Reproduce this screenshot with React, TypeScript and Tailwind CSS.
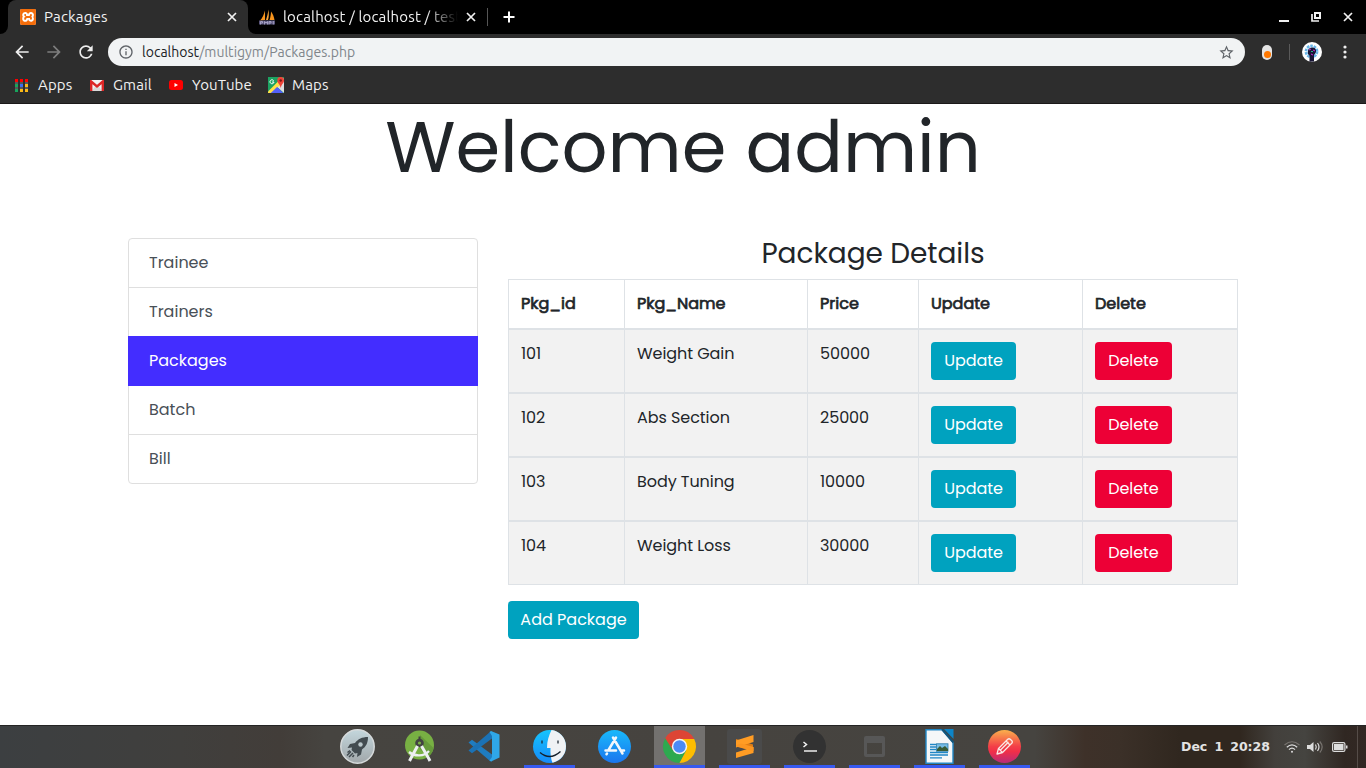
import React from "react";
import { MdArrowBack, MdArrowForward, MdRefresh, MdStarBorder, MdInfoOutline } from "react-icons/md";
import { SiXampp } from "react-icons/si";

const POPPINS = "font-[Poppins,Inter,'Liberation_Sans',sans-serif]";
const UBUNTU = "font-[Ubuntu,'Noto_Sans','Open_Sans',sans-serif]";

function CloseX({ className = "" }: { className?: string }) {
  return (
    <svg className={className} width="10" height="10" viewBox="0 0 10 10" stroke="#f1f1f1" strokeWidth="1.7">
      <path d="M1 1L9 9M9 1L1 9" />
    </svg>
  );
}

function SailFavicon() {
  return (
    <svg width="16" height="16" viewBox="0 0 16 16">
      <path d="M6 1.5L6 11L1 11.5C3.5 9 5 5 6 1.5Z" fill="#f7941d" />
      <path d="M9.5 0.5C10 5 10 8 9 11L7 11C8 8 9 4 9.5 0.5Z" fill="#f9a63a" />
      <path d="M12 2.5C14 5 15 8 15.5 11L10.5 11C11.5 8 12 5 12 2.5Z" fill="#f7941d" />
      <path d="M0 11.500H16V15.500H0Z" fill="#5b567c" />
      <path d="M1.500 15.500V12.500H3.500V14H1.500M5.500 15.500V12.500L7 14L8.500 12.500V15.500M10 15.500V12.500H12V14H10M14.300 12V15.500" fill="none" stroke="#aaa6c8" strokeWidth="0.9" />
    </svg>
  );
}

function TabStrip() {
  return (
    <div className="flex h-[34px] w-full items-stretch bg-black text-[15px] tracking-[0.17px] text-[#f1f1f1]">
      <div className="flex w-2 items-end bg-black">
        <div className="size-2 bg-[#2d2d2d]">
          <div className="size-2 rounded-br-lg bg-black" />
        </div>
      </div>
      <div className="flex w-[240px] items-center rounded-t-lg bg-[#2d2d2d] pl-3 pr-[11px]">
        <div className="flex size-4 items-center justify-center rounded-[2px] bg-white">
          <SiXampp size={16} className="text-[#f46d0b]" />
        </div>
        <span className="ml-2 w-[64px] whitespace-nowrap">Packages</span>
        <CloseX className="ml-auto" />
      </div>
      <div className="flex w-2 items-end bg-black">
        <div className="size-2 bg-[#2d2d2d]">
          <div className="size-2 rounded-bl-lg bg-black" />
        </div>
      </div>
      <div className="flex w-[231px] items-center pl-[3px] pr-[11px]">
        <SailFavicon />
        <span className="ml-2 w-[175px] overflow-hidden whitespace-nowrap [mask-image:linear-gradient(to_right,black_82%,transparent_100%)]">
          localhost / localhost / test
        </span>
        <CloseX className="ml-[8px] shrink-0" />
      </div>
      <div className="my-auto h-[18px] w-px bg-[#555]" />
      <svg className="my-auto ml-[15px]" width="12" height="12" viewBox="0 0 12 12" stroke="#fff" strokeWidth="2">
        <path d="M6 0.500V11.500M0.500 6H11.500" />
      </svg>
      <div className="ml-auto flex items-center gap-[22px] pr-[13px]">
        <svg width="10" height="10" viewBox="0 0 10 10">
          <path d="M0 8H10V10H0Z" fill="#f1f1f1" />
        </svg>
        <svg width="10" height="10" viewBox="0 0 10 10">
          <path d="M4 1H9V6H4Z" fill="none" stroke="#f1f1f1" strokeWidth="2" />
          <path d="M1 2V9H8" fill="none" stroke="#f1f1f1" strokeWidth="1.700" />
        </svg>
        <CloseX />
      </div>
    </div>
  );
}

function Toolbar() {
  return (
    <div className="flex h-[36px] items-center bg-[#2d2d2d] pl-3 pr-[19px]">
      <MdArrowBack size={20} className="text-[#eeeeee]" />
      <MdArrowForward size={20} className="ml-3 text-[#7d7d7d]" />
      <MdRefresh size={20} className="ml-3 text-[#eeeeee]" />
      <div className="ml-3 flex h-7 w-[1137px] items-center rounded-full bg-[#f1f3f4] pl-[10px] pr-[10px]">
        <MdInfoOutline size={16} className="text-[#5f6368]" />
        <span className="ml-2 whitespace-nowrap text-[14px] tracking-[0.02px] text-[#80868b]">
          <span className="text-[#202124]">localhost</span>/multigym/Packages.php
        </span>
        <MdStarBorder size={17} className="ml-auto text-[#5f6368]" />
      </div>
      <div className="ml-[17px] flex h-[15px] w-[10px] items-end justify-center rounded-[5px] bg-[#e4e4e4] pb-[1.500px]">
        <div className="size-[7px] rounded-full bg-[#ff7800]" />
      </div>
      <div className="ml-[17px] h-4 w-px bg-[#5a5a5a]" />
      <svg className="ml-3" width="20" height="20" viewBox="0 0 20 20">
        <circle cx="10" cy="10" r="10" fill="#fff" />
        <circle cx="9.500" cy="9.500" r="5.600" fill="#d6ecfb" stroke="#68b5e8" strokeWidth="2.600" strokeDasharray="2.500 1" />
        <path d="M6 9C6 5 13 4 14 8C14.500 10 13 12 12 13V19.500L7.500 19.800V13.500C6 13 5.500 11 6 9Z" fill="#191635" />
        <path d="M7 8L9 7M11 8L13 9M9 12L11 13" stroke="#d12be0" strokeWidth="1" />
        <path d="M9 9.500H11" stroke="#28ae91" />
      </svg>
      <svg className="ml-auto" width="4" height="14" viewBox="0 0 4 14" fill="#eee">
        <circle cx="2" cy="2" r="1.600" />
        <circle cx="2" cy="7" r="1.600" />
        <circle cx="2" cy="12" r="1.600" />
      </svg>
    </div>
  );
}

function Bookmarks() {
  return (
    <div className="flex h-[34px] items-center border-b border-[#1b1919] bg-[#2d2d2d] pb-[3px] pl-[15px] text-[15px] tracking-[0.15px] text-[#f1f1f1]">
      <svg width="13" height="13" viewBox="0 0 13 13">
        <path d="M0 0h3v3h-3zM5 0h3v3h-3zM10 0h3v3h-3z" fill="#f00" />
        <path d="M0 5h3v3h-3z" fill="#17a45c" />
        <path d="M5 5h3v3h-3z" fill="#3b6df0" />
        <path d="M10 5h3v3h-3zM5 10h3v3h-3zM10 10h3v3h-3z" fill="#fbb917" />
        <path d="M0 10h3v3h-3z" fill="#17a45c" />
        <path d="M0 4h3M5 4h3M10 4h3M0 9h3M5 9h3M10 9h3" stroke="#9a9a9a" strokeWidth="0.800" />
      </svg>
      <span className="ml-[10px] w-[35px] whitespace-nowrap">Apps</span>
      <svg className="ml-[17px]" width="14" height="11" viewBox="0 0 14 11">
        <rect width="14" height="11" rx="1" fill="#f2f2f2" />
        <path d="M2 11L5.500 6L7 7.500L8.500 6L12 11Z" fill="#d9d9d9" />
        <path d="M1.200 11V1.500L7 6.500L12.800 1.500V11" fill="none" stroke="#dc2626" strokeWidth="2.400" />
      </svg>
      <span className="ml-[9px] w-[39px] whitespace-nowrap">Gmail</span>
      <svg className="ml-[17px]" width="14" height="10" viewBox="0 0 14 10">
        <rect width="14" height="10" rx="2.500" fill="#f00" />
        <path d="M5.500 3V7L9 5Z" fill="#fff" />
      </svg>
      <span className="ml-[9px] w-[60px] whitespace-nowrap">YouTube</span>
      <svg className="ml-4" width="16" height="16" viewBox="0 0 16 16">
        <path d="M0 0H16V16H0Z" fill="#1ca261" />
        <path d="M8 9L16 1V16Z" fill="#dedede" />
        <path d="M1 16L8 9L15 16Z" fill="#4c64f5" />
        <path d="M0 14.500L11 3.500L14 6.500L3 16H0Z" fill="#ffe047" />
        <path d="M3 16L9 10L15 16Z" fill="#5360fa" />
        <path d="M5.700 3.700A2 2 0 1 0 6 5H4" fill="none" stroke="#fff" strokeWidth="1" />
        <path d="M12.500 0A3.400 3.400 0 0 1 16 3.500C16 6 13.500 7 12.700 11C12 7 9.300 6 9.300 3.500A3.300 3.300 0 0 1 12.500 0Z" fill="#ef4438" />
        <circle cx="12.700" cy="3.500" r="1.200" fill="#7b1712" />
      </svg>
      <span className="ml-2 whitespace-nowrap">Maps</span>
    </div>
  );
}

const links = ["Trainee", "Trainers", "Packages", "Batch", "Bill"];

function SideNav() {
  return (
    <nav className="mt-[1px] flex w-[350px] flex-col">
      {links.map((label) => (
        <a
          key={label}
          className={
            label === "Packages"
              ? "z-10 -mb-px h-[50px] border border-[#432dff] bg-[#432dff] px-5 py-3 leading-6 text-white"
              : "-mb-px h-[50px] border border-[#dfdfdf] px-5 py-3 leading-6 text-[#495057] first:rounded-t last:rounded-b"
          }
        >
          {label}
        </a>
      ))}
    </nav>
  );
}

const packages = [
  { id: "101", name: "Weight Gain", price: "50000" },
  { id: "102", name: "Abs Section", price: "25000" },
  { id: "103", name: "Body Tuning", price: "10000" },
  { id: "104", name: "Weight Loss", price: "30000" },
];

function Button({ children, className }: { children: React.ReactNode; className: string }) {
  return (
    <button className={`flex h-[38px] items-center justify-center whitespace-nowrap rounded leading-6 text-white ${className}`}>
      {children}
    </button>
  );
}

function PackageTable() {
  return (
    <table className="mt-2 w-[730px] table-fixed border-separate border-spacing-0 border-r border-[#dee2e6] text-left text-[#212529]">
      <colgroup>
        <col className="w-[116px]" />
        <col className="w-[183px]" />
        <col className="w-[111px]" />
        <col className="w-[164px]" />
        <col className="w-[155px]" />
      </colgroup>
      <thead>
        <tr className="h-[51px] align-top">
          {["Pkg_id", "Pkg_Name", "Price", "Update", "Delete"].map((h) => (
            <th key={h} className="border-b-2 border-l border-t border-[#dee2e6] px-3 pb-0 pt-3 font-normal leading-6 [-webkit-text-stroke:0.7px_#212529]">
              {h}
            </th>
          ))}
        </tr>
      </thead>
      <tbody className="[&_td]:border-b-2 [&_td]:border-l [&_td]:border-[#dee2e6] [&_td]:px-3 [&_td]:pt-3 [&_td]:tracking-[-0.06px] [&_tr:last-child_td]:border-b">
        {packages.map((p) => (
          <tr key={p.id} className="h-16 bg-[#f2f2f2] align-top last:h-[63px]">
            <td>{p.id}</td>
            <td>{p.name}</td>
            <td>{p.price}</td>
            <td>
              <Button className="w-[85px] bg-[#00a2bf]">Update</Button>
            </td>
            <td>
              <Button className="w-[77px] bg-[#ed0036]">Delete</Button>
            </td>
          </tr>
        ))}
      </tbody>
    </table>
  );
}

function RocketIcon() {
  return (
    <svg width="35" height="35" viewBox="0 0 35 35">
      <defs>
        <linearGradient id="rk" x1="0" y1="0" x2="0" y2="1">
          <stop offset="0" stopColor="#c3d6dc" />
          <stop offset="1" stopColor="#a1a7aa" />
        </linearGradient>
      </defs>
      <circle cx="17.500" cy="17.500" r="16.700" fill="url(#rk)" stroke="#d6dadb" strokeWidth="1.500" />
      <path d="M28 8C22 8 18 10 15 14L10 15L7.500 19L12 18.500L11.500 21L15 24.500L17.500 24L17 28L21 25.500L22 20.500C26 17.500 28 14 28 8Z" fill="#424b50" />
      <circle cx="20.500" cy="15.500" r="2.200" fill="#b9c6ca" />
      <path d="M11 22.500L7 26.500M13 24L9 28M10 21.500L7.500 23.500M14 26L12.500 28" stroke="#424b50" strokeWidth="1.500" />
    </svg>
  );
}

function AndroidStudioIcon() {
  return (
    <svg width="35" height="35" viewBox="0 0 35 35">
      <circle cx="17.500" cy="16" r="14.500" fill="#78b043" />
      <path d="M18 6L31.500 19A14.500 14.500 0 0 1 26 28L18 20Z" fill="#669a3a" />
      <path d="M16.500 7.500H18.500V10H16.500Z" fill="#424242" />
      <circle cx="17.500" cy="14" r="4.300" fill="#424242" />
      <circle cx="17.500" cy="14" r="1.600" fill="#78b043" />
      <path d="M15.500 17L8.500 30L7.500 32M19.500 17L27 30L28 32" stroke="#eceff1" strokeWidth="3" fill="none" />
      <path d="M7 23C13 28 22 27.500 27 22" stroke="#eceff1" strokeWidth="2.300" fill="none" />
    </svg>
  );
}

function CodeIcon() {
  return (
    <svg width="35" height="35" viewBox="0 0 35 35">
      <path d="M1.500 13.500L5 10.700L25 25.500V32.500L23 32Z" fill="#1f7cc0" />
      <path d="M1.500 21.500L5 24.300L25 9.500V2.500L23 3Z" fill="#1b72b5" />
      <path d="M24 2L32.500 5.500V28.500L24 32.500L22.500 31.500L25 28V7L22.500 3Z" fill="#2fa7e8" />
    </svg>
  );
}

function FinderIcon() {
  return (
    <svg width="35" height="35" viewBox="0 0 35 35">
      <defs>
        <linearGradient id="fi" x1="0" y1="0" x2="0" y2="1">
          <stop offset="0" stopColor="#16c4fd" />
          <stop offset="1" stopColor="#158bf8" />
        </linearGradient>
      </defs>
      <circle cx="17.500" cy="17.500" r="16.500" fill="url(#fi)" />
      <path d="M19.500 1.100A16.500 16.500 0 0 1 20.500 33.700Q18 28 18.500 19H15C15 12 17 6 19.500 1.100Z" fill="#f0f2f4" />
      <path d="M10 11.500V14.500M26 11.500V14.500" stroke="#202a34" strokeWidth="1.300" />
      <path d="M8 23.500Q18 32 28.500 22.500" fill="none" stroke="#16202a" strokeWidth="1.400" />
    </svg>
  );
}

function AppStoreIcon() {
  return (
    <svg width="35" height="35" viewBox="0 0 35 35">
      <defs>
        <linearGradient id="as" x1="0" y1="0" x2="0" y2="1">
          <stop offset="0" stopColor="#19b9fb" />
          <stop offset="1" stopColor="#1a75ee" />
        </linearGradient>
      </defs>
      <circle cx="17.500" cy="17.500" r="16.500" fill="url(#as)" />
      <g stroke="#f2f7fc" strokeWidth="2.500" strokeLinecap="round">
        <path d="M19 8.500L11.500 21M16 8.500L25.500 24.500M8.500 21.500H19M24 21.500H27M10 24.500L9.500 25.200" />
      </g>
    </svg>
  );
}

function ChromeIcon() {
  return (
    <svg width="35" height="35" viewBox="0 0 35 35">
      <path d="M17.500 17.500L3.210 9.250A16.500 16.500 0 0 0 17.500 34L24.500 21.500Z" fill="#2da94f" />
      <path d="M17.500 17.500V10H32.200A16.500 16.500 0 0 1 17.500 34L24.200 21.500Z" fill="#fdbd00" />
      <path d="M3.210 9.250L11 21.500L17.500 10H32.200L31.790 9.250A16.500 16.500 0 0 0 3.210 9.250Z" fill="#dd4535" />
      <circle cx="17.500" cy="17.500" r="7.700" fill="#f5f5f5" />
      <circle cx="17.500" cy="17.500" r="6.200" fill="#4c8bf5" />
    </svg>
  );
}

function SublimeIcon() {
  return (
    <svg width="35" height="35" viewBox="0 0 35 35">
      <rect width="35" height="35" rx="3" fill="#4a4a4a" />
      <path d="M9 17L26 22.500V15.500L9 10Z" fill="#e07d14" />
      <path d="M9 11.500L26.500 6V13L9 18.500Z" fill="#ff9c24" />
      <path d="M9 23.500L26.500 18V24L9 29Z" fill="#ff9c24" />
      <path d="M9 17.500L26.500 22V18L14 14.500L9 16Z" fill="#fb9520" />
    </svg>
  );
}

function TerminalIcon() {
  return (
    <svg width="35" height="35" viewBox="0 0 35 35">
      <circle cx="17.500" cy="17.500" r="16.500" fill="#323232" />
      <path d="M11.500 13L14.500 15.500L11.500 18" stroke="#f3f3f3" strokeWidth="1.500" fill="none" />
      <path d="M12 22H25" stroke="#cfcfcf" strokeWidth="1.800" />
    </svg>
  );
}

function WindowIcon() {
  return (
    <svg width="35" height="35" viewBox="0 0 35 35">
      <path d="M9 7H26Q28 7 28 9V26Q28 28 26 28H9Q7 28 7 26V9Q7 7 9 7ZM10 14V25H25V14Z" fill="#575757" fillRule="evenodd" />
    </svg>
  );
}

function WriterIcon() {
  return (
    <svg width="35" height="35" viewBox="0 0 35 35">
      <path d="M4 0.700H20L31 13.500V34.300H4Z" fill="#f5f7f8" stroke="#2187c5" strokeWidth="1.400" />
      <path d="M22 0H31.500V10Z" fill="#0d85c8" />
      <path d="M20 0L31.500 13.500" stroke="#165478" strokeWidth="2" />
      <path d="M8 15.500H14M8 18H14M8 20.500H14M8 23.500H26M8 26H26M8 28.800H20" stroke="#2187c5" strokeWidth="1.300" />
      <rect x="14.500" y="14.800" width="11.500" height="7.400" fill="#76bce5" stroke="#2378a8" strokeWidth="0.800" />
      <path d="M15 22V20L18 17L20 19L23 17L26 20V22Z" fill="#385b35" />
    </svg>
  );
}

function PencilIcon() {
  return (
    <svg width="35" height="35" viewBox="0 0 35 35">
      <defs>
        <linearGradient id="pn" x1="0" y1="0" x2="0" y2="1">
          <stop offset="0" stopColor="#fbb04c" />
          <stop offset="0.500" stopColor="#f33f48" />
          <stop offset="0.650" stopColor="#f12f48" />
          <stop offset="1" stopColor="#b82b78" />
        </linearGradient>
      </defs>
      <circle cx="17.500" cy="17.500" r="16.500" fill="url(#pn)" />
      <g fill="none" stroke="#fbe9e6" strokeWidth="1.300" strokeLinejoin="round">
        <path d="M10 25L11.500 19.500L20.500 10.500Q22 9 23.500 10.500L24.800 11.800Q26 13 24.500 14.500L15.500 23.500Z" />
        <path d="M19 12L23 16M13 21.500L21.500 13M11.500 19.500L15.500 23.500" />
      </g>
    </svg>
  );
}

const dock = [
  { Icon: RocketIcon, open: false, cls: "-mr-[3px]" },
  { Icon: AndroidStudioIcon, open: false, cls: "" },
  { Icon: CodeIcon, open: false, cls: "" },
  { Icon: FinderIcon, open: true, cls: "" },
  { Icon: AppStoreIcon, open: false, cls: "" },
  { Icon: ChromeIcon, open: true, cls: "bg-[#73716f]" },
  { Icon: SublimeIcon, open: true, cls: "" },
  { Icon: TerminalIcon, open: true, cls: "" },
  { Icon: WindowIcon, open: true, cls: "" },
  { Icon: WriterIcon, open: true, cls: "" },
  { Icon: PencilIcon, open: true, cls: "" },
];

function Taskbar() {
  return (
    <footer className="flex h-[43px] border-t border-[#242424] bg-[linear-gradient(90deg,#3c3f41_0px,#403f3d_180px,#423d39_280px,#464440_325px,#46433f_700px,#464440_1035px,#3e3129_1085px,#3b3028_1120px,#30271f_1180px,#30271f_1240px,#43403c_1275px,#454440_1305px,#302722_1345px,#322824_1366px)]">
      <div className="flex gap-[14px] pl-[332px]">
        {dock.map(({ Icon, open, cls }, i) => (
          <div key={i} className={`flex h-[42px] w-[51px] flex-col items-center justify-between pt-[3px] ${cls}`}>
            <Icon />
            {open && <div className="h-[3px] w-full bg-[#3759f0]" />}
          </div>
        ))}
      </div>
      <div className="ml-auto flex items-center">
        <div className="mr-[14px] flex w-[89px] justify-between whitespace-nowrap font-['DejaVu_Sans',sans-serif] text-[12.5px] font-bold text-[#e3e3e3]">
          <span>Dec</span>
          <span>1</span>
          <span>20:28</span>
        </div>
        <svg width="16" height="12" viewBox="0 0 16 12" fill="none" stroke="#ddd" strokeWidth="1.200">
          <path d="M0.500 4Q8 -2.500 15.500 4" stroke="#77736f" />
          <path d="M2.800 6.300Q8 1.500 13.200 6.300M5 8.700Q8 5.700 11 8.700" />
          <circle cx="8" cy="10.700" r="1" fill="#ddd" stroke="none" />
        </svg>
        <svg className="ml-[7px]" width="17" height="14" viewBox="0 0 17 14" fill="none" stroke="#ddd" strokeWidth="1.200">
          <path d="M0 5H3L6.500 2V12L3 9H0Z" fill="#ddd" stroke="none" />
          <path d="M8.500 4.500Q10 7 8.500 9.500M10.500 3Q13.500 7 10.500 11" />
          <path d="M12.800 1.500Q17.500 7 12.800 12.500" stroke="#77736f" />
        </svg>
        <svg className="ml-2" width="16" height="10" viewBox="0 0 16 10">
          <rect x="0.600" y="0.600" width="12.300" height="8.800" rx="1.500" fill="none" stroke="#ddd" strokeWidth="1.200" />
          <rect x="2" y="2" width="9.500" height="6" fill="#ddd" />
          <path d="M14 3.500H15.500V6.500H14Z" fill="#ddd" />
        </svg>
        <div className="ml-[9px] mr-2 h-[42px] w-px bg-[#554c48]" />
      </div>
    </footer>
  );
}

export default function App() {
  return (
    <div className="flex h-[768px] w-[1366px] flex-col overflow-hidden bg-white">
      <header className={UBUNTU}>
        <TabStrip />
        <Toolbar />
        <Bookmarks />
      </header>
      <main className={`flex-1 text-[16px] text-[#212529] ${POPPINS}`}>
        <h1 className="h-[86px] text-center text-[72px] font-normal leading-[86px]">Welcome admin</h1>
        <div className="mx-auto mt-[47px] flex w-[1110px] gap-[30px]">
          <SideNav />
          <section className="w-[730px]">
            <h3 className="h-[34px] text-center text-[28px] leading-[34px] tracking-[-0.05px]">Package Details</h3>
            <PackageTable />
            <Button className="mt-4 w-[131px] bg-[#00a2bf]">Add Package</Button>
          </section>
        </div>
      </main>
      <Taskbar />
    </div>
  );
}
